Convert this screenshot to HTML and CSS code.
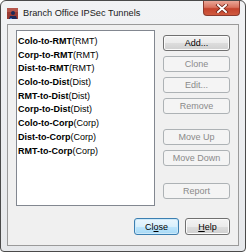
FILE: index.html
```html
<!DOCTYPE html>
<html>

<head>
	<meta charset="utf-8">
	<title>Branch Office IPSec Tunnels</title>
	<link rel="stylesheet" href="styles.css">
</head>

<body>
	<div class="window">
		<div class="titlebar">
			<svg class="app-icon" width="11" height="11" viewBox="0 0 11 11">
				<rect x="0" y="0" width="11" height="11" fill="#9b3b33" />
				<rect x="0" y="0" width="11" height="4" fill="#b5564b" />
				<circle cx="6" cy="5" r="2" fill="#1c2a5a" />
				<path d="M2 11 L3 8 L9 8 L10 11 Z" fill="#1c2a5a" />
				<rect x="3" y="10" width="2" height="1" fill="#4a78c8" />
			</svg>
			<span class="title">Branch Office IPSec Tunnels</span>
			<div class="close-btn">
				<svg width="14" height="9" viewBox="0 0 14 9">
					<path d="M3 1 L11 8 M11 1 L3 8" stroke="#6b2014" stroke-width="3.4" stroke-linecap="square" />
					<path d="M3 1 L11 8 M11 1 L3 8" stroke="#ffffff" stroke-width="2" stroke-linecap="square" />
				</svg>
			</div>
		</div>
		<div class="client">
			<div class="main">
				<ul class="tunnels">
					<li><b>Colo-to-RMT</b>(RMT)</li>
					<li><b>Corp-to-RMT</b>(RMT)</li>
					<li><b>Dist-to-RMT</b>(RMT)</li>
					<li><b>Colo-to-Dist</b>(Dist)</li>
					<li><b>RMT-to-Dist</b>(Dist)</li>
					<li><b>Corp-to-Dist</b>(Dist)</li>
					<li><b>Colo-to-Corp</b>(Corp)</li>
					<li><b>Dist-to-Corp</b>(Corp)</li>
					<li><b>RMT-to-Corp</b>(Corp)</li>
				</ul>
				<div class="actions">
					<button class="btn">Add...</button>
					<button class="btn" disabled>Clone</button>
					<button class="btn" disabled>Edit...</button>
					<button class="btn" disabled>Remove</button>
					<button class="btn spaced" disabled>Move Up</button>
					<button class="btn" disabled>Move Down</button>
					<button class="btn spaced-lg" disabled>Report</button>
				</div>
			</div>
			<div class="footer">
				<button class="btn btn-default">Cl<u>o</u>se</button>
				<button class="btn"><u>H</u>elp</button>
			</div>
		</div>
	</div>
</body>

</html>
```

FILE: styles.css
```css
* {
	margin: 0;
	padding: 0;
	box-sizing: border-box;
}
body {
	background-color: #ffffff;
	font-family: "Liberation Sans", Arial, sans-serif;
	font-size: 9px;
	color: #000000;
}
.window {
	width: 246px;
	height: 252px;
	border: 1px solid #4a4a4a;
	border-radius: 6px 6px 4px 4px;
	padding: 0 6px 5px;
	background: linear-gradient(#f1f2f4, #e6e8eb);
	display: flex;
	flex-direction: column;
}
.titlebar {
	height: 23px;
	display: flex;
	align-items: center;
	padding-left: 0;
}
.app-icon {
	margin-top: 1px;
	flex-shrink: 0;
}
.title {
	margin-left: 5px;
	font-size: 9.2px;
	color: #1a1a1a;
	margin-top: 1px;
}
.close-btn {
	align-self: flex-start;
	margin-left: auto;
	margin-right: -1px;
	width: 37px;
	height: 15px;
	border: 1px solid #8b3a2e;
	border-top: none;
	border-radius: 0 0 4px 4px;
	background: linear-gradient(#e9a697 0%, #d9735f 45%, #c4432d 55%, #cf5a3f 100%);
	display: flex;
	align-items: center;
	justify-content: center;
}
.client {
	flex: 1;
	border: 1px solid #9a9a9a;
	background-color: #f0f0f0;
	padding: 5px 8px 9px;
	display: flex;
	flex-direction: column;
}
.main {
	display: flex;
	gap: 8px;
	height: 176px;
}
.tunnels {
	list-style: none;
	width: 139px;
	height: 176px;
	border: 1px solid #828790;
	background-color: #ffffff;
	padding: 4px 1px;
}
.tunnels li {
	line-height: 13.7px;
	height: 13.7px;
	white-space: nowrap;
	font-size: 9px;
}
.actions {
	width: 67px;
	display: flex;
	flex-direction: column;
	gap: 5px;
	padding-top: 5px;
}
.btn {
	height: 16px;
	width: 67px;
	font-family: "Liberation Sans", Arial, sans-serif;
	font-size: 9px;
	color: #000000;
	border: 1px solid #707070;
	border-radius: 3px;
	background: linear-gradient(#f3f3f3 0%, #ebebeb 50%, #dddddd 51%, #cfcfcf 100%);
	box-shadow: inset 0 0 0 1px #fbfbfb;
	outline: none;
}
.btn:disabled {
	color: #8a8a8a;
	border-color: #adb2b5;
	background: #f4f4f4;
	box-shadow: none;
}
.spaced {
	margin-top: 10px;
}
.spaced-lg {
	margin-top: 12px;
}
.footer {
	margin-top: 12px;
	display: flex;
	justify-content: flex-end;
	gap: 6px;
}
.footer .btn {
	width: 45px;
	height: 17px;
}
.btn-default {
	border-color: #3c7fb1;
	background: linear-gradient(#eaf6fd 0%, #d9f0fc 50%, #bee6fd 51%, #a7d9f5 100%);
	box-shadow: inset 0 0 0 1px #cde9f9;
}
```
